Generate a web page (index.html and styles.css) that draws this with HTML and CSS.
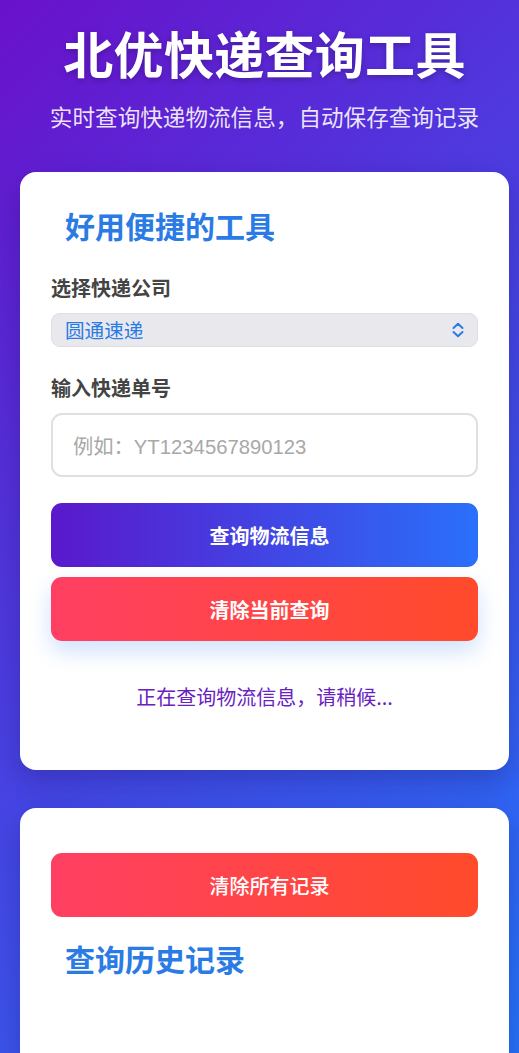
FILE: index.html
```html
<!DOCTYPE html>
<html lang="zh-CN">
<head>
<meta charset="utf-8">
<title>北优快递查询工具</title>
<link rel="stylesheet" href="styles.css">
</head>
<body>
<div class="page">
  <header class="header">
    <h1 class="title">北优快递查询工具</h1>
    <p class="subtitle">实时查询快递物流信息，自动保存查询记录</p>
  </header>

  <section class="card card-query">
    <h2 class="card-heading">好用便捷的工具</h2>
    <label class="field-label">选择快递公司</label>
    <div class="select">
      <span class="select-value">圆通速递</span>
      <svg class="select-icon" width="14" height="16" viewBox="0 0 14 16" aria-hidden="true">
        <path d="M2.5 6 L7 1.8 L11.5 6" fill="none" stroke="#2a7be4" stroke-width="2" stroke-linecap="round" stroke-linejoin="round"/>
        <path d="M2.5 10 L7 14.2 L11.5 10" fill="none" stroke="#2a7be4" stroke-width="2" stroke-linecap="round" stroke-linejoin="round"/>
      </svg>
    </div>
    <label class="field-label field-label-2">输入快递单号</label>
    <div class="input"><span class="placeholder">例如：YT1234567890123</span></div>
    <button class="btn btn-primary btn-first">查询物流信息</button>
    <button class="btn btn-danger btn-glow">清除当前查询</button>
    <p class="loading">正在查询物流信息，请稍候...</p>
  </section>

  <section class="card card-history">
    <button class="btn btn-danger btn-light">清除所有记录</button>
    <h2 class="card-heading history-heading">查询历史记录</h2>
  </section>
</div>
</body>
</html>
```

FILE: styles.css
```css
* { box-sizing: border-box; }
html, body { margin: 0; padding: 0; }
body {
  font-family: "Noto Sans CJK SC", "Liberation Sans", sans-serif;
  background: linear-gradient(135deg, #6a11cb 0%, #2575fc 100%) fixed;
  min-height: 100vh;
}
.page {
  padding: 22px 10px 20px 20px;
}
.header { text-align: center; }
.title {
  margin: 0;
  font-size: 50px;
  line-height: 60px;
  font-weight: 700;
  color: #fff;
  letter-spacing: 0.3px;
  text-shadow: 0 2px 6px rgba(0, 0, 0, 0.25);
}
.subtitle {
  margin: 20px 0 0;
  font-size: 22.6px;
  line-height: 30px;
  color: rgba(255, 255, 255, 0.88);
  font-weight: 400;
}
.card {
  background: #fff;
  border-radius: 16px;
  box-shadow: 0 12px 30px rgba(20, 10, 80, 0.28);
  padding: 33px 31px 60px;
  width: 489px;
}
.card-query { margin-top: 40px; }
.card-heading {
  margin: 0;
  padding-left: 14px;
  font-size: 30px;
  line-height: 40px;
  font-weight: 700;
  color: #2a7be4;
}
.field-label {
  display: block;
  margin-top: 30px;
  font-size: 20px;
  line-height: 26px;
  font-weight: 700;
  color: #444;
}
.field-label-2 { margin-top: 28px; }
.select {
  margin-top: 12px;
  height: 34px;
  border-radius: 9px;
  background: #e9e9ed;
  border: 1px solid #dedee3;
  display: flex;
  align-items: center;
  justify-content: space-between;
  padding: 0 12px 0 13px;
}
.select-value {
  font-size: 19.6px;
  color: #2a7be4;
  line-height: 1;
}
.select-icon { display: block; }
.input {
  margin-top: 12px;
  height: 64px;
  border: 2px solid #e0e0e0;
  border-radius: 11px;
  display: flex;
  align-items: center;
  padding-left: 20px;
}
.placeholder {
  font-family: "Liberation Sans", "Noto Sans CJK SC", sans-serif;
  font-size: 20.3px;
  color: #a8a8a8;
}
.btn {
  display: flex;
  align-items: center;
  justify-content: center;
  width: 100%;
  height: 64px;
  border: none;
  border-radius: 11px;
  font-family: "Noto Sans CJK SC", "Liberation Sans", sans-serif;
  font-size: 20px;
  font-weight: 700;
  color: #fff;
  padding: 0 0 0 10px;
}
.btn-primary {
  background: linear-gradient(90deg, #5a18cc 0%, #2a70fa 100%);
}
.btn-first { margin-top: 26px; }
.btn-danger {
  background: linear-gradient(90deg, #ff3f62 0%, #ff4b2b 100%);
}
.btn-glow {
  margin-top: 10px;
  box-shadow: 0 10px 22px rgba(37, 117, 252, 0.22);
}
.btn-light { font-weight: 500; }
.loading {
  margin: 43px 0 0;
  text-align: center;
  font-size: 20px;
  line-height: 26px;
  color: #6a22bf;
}
.card-history {
  margin-top: 38px;
  padding-top: 45px;
  min-height: 300px;
}
.history-heading { margin-top: 21px; }
```
